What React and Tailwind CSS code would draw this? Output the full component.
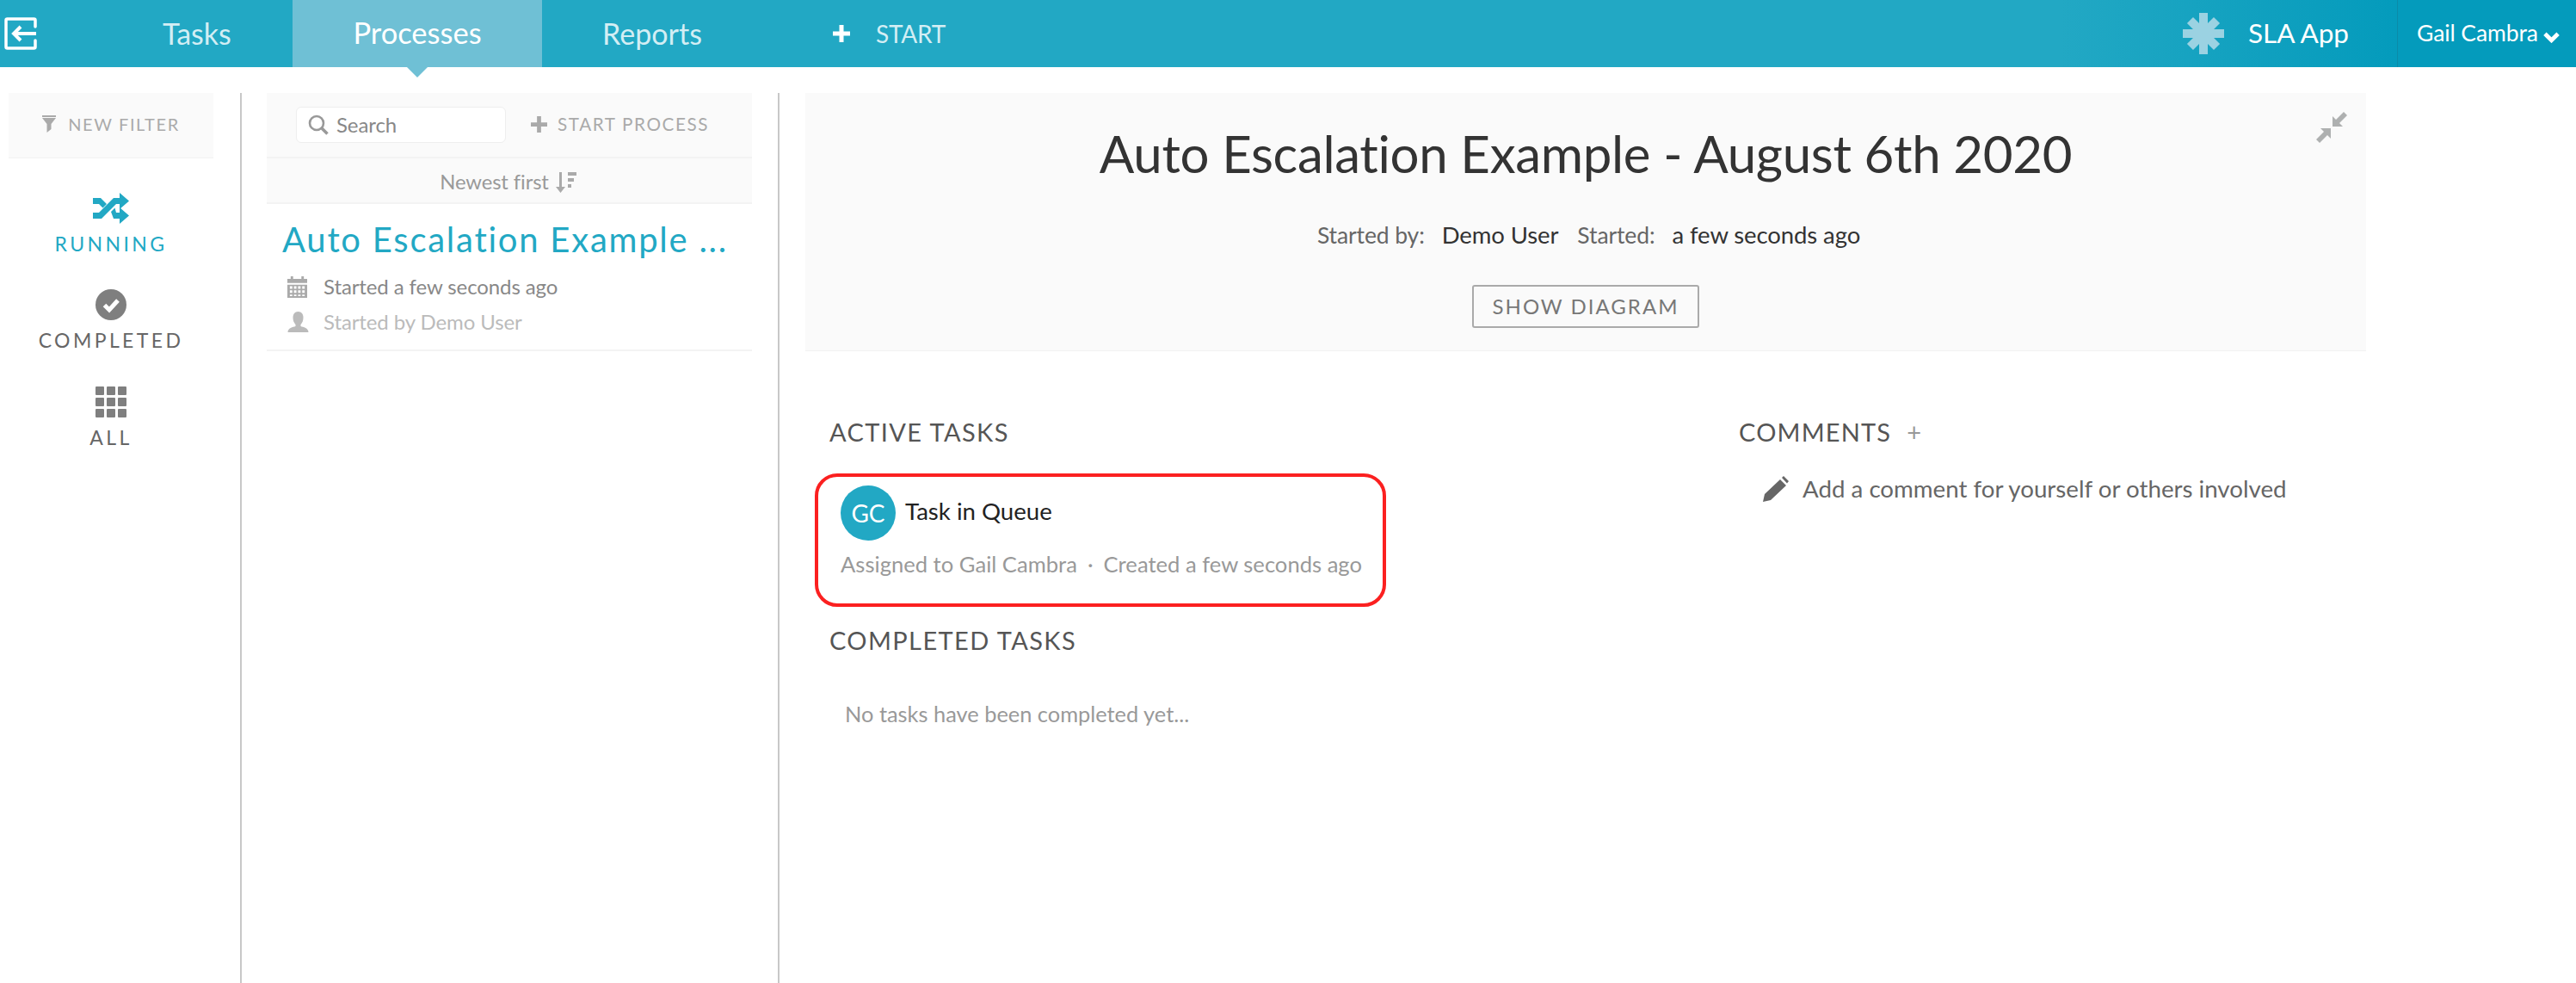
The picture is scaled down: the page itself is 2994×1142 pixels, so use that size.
import React from "react";

const Plus = ({ className }) => (
  <svg viewBox="0 0 20 20" className={className} fill="currentColor"><path d="M7.5 0h5v7.5H20v5h-7.5V20h-5v-7.5H0v-5h7.5z" /></svg>
);
const LogIn = () => (
  <svg viewBox="0 0 38 38" className="w-[38px] h-[38px] text-white" fill="none" stroke="currentColor" strokeWidth="3.5">
    <path d="M36 11V3.500a1.500 1.500 0 0 0-1.500-1.500H3.500A1.500 1.500 0 0 0 2 3.500v31A1.500 1.500 0 0 0 3.500 36h31a1.500 1.500 0 0 0 1.500-1.500V27" strokeLinecap="round" />
    <path d="M37 19H11M19 11l-8 8 8 8" strokeWidth="4" />
  </svg>
);
const Asterisk = () => (
  <svg viewBox="0 0 48 48" className="w-[48px] h-[48px] text-[#9bd2e2]" fill="currentColor">
    <rect x="19" y="0" width="10" height="48" />
    <rect x="0" y="19" width="48" height="10" />
    <rect x="19" y="2" width="10" height="44" transform="rotate(45 24 24)" />
    <rect x="19" y="2" width="10" height="44" transform="rotate(-45 24 24)" />
  </svg>
);
const Chevron = () => (
  <svg viewBox="0 0 20 14" className="w-[19px] h-[14px] text-white" fill="none" stroke="currentColor" strokeWidth="5"><path d="M2 3l8 8 8-8" /></svg>
);
const Filter = () => (
  <svg viewBox="0 0 16 20" className="w-[16px] h-[20px] text-[#aaa]" fill="currentColor">
    <path d="M0 0h16v2H0zM0 3h16l-5.500 7v6l-5 4V10z" />
  </svg>
);
const Search = () => (
  <svg viewBox="0 0 24 24" className="w-[24px] h-[24px] text-[#999]" fill="none" stroke="currentColor" strokeWidth="2.600">
    <circle cx="10" cy="10" r="8" /><path d="M16 16l6.500 6.500" strokeWidth="3.600" />
  </svg>
);
const SortIcon = () => (
  <svg viewBox="0 0 24 24" className="w-[24px] h-[24px] text-[#aaa]" fill="currentColor">
    <path d="M4 0h3v17h4l-5.500 7L0 17h4zM14 0h10v4H14zM14 7h7v4h-7zM14 14h4v4h-4z" />
  </svg>
);
const Shuffle = ({ className }) => (
  <svg viewBox="0 0 42 36" className={className} fill="currentColor">
    <path d="M0 6h9l7 7-4.500 4.500L7 13H0zM0 23h7L24 6h7V0l11 9.500L31 19v-6h-4L10 30H0z" />
    <path d="M21 22l4.500-4.500L27 23h4v-6l11 9.500L31 36v-6h-7z" />
  </svg>
);
const OkSign = () => (
  <svg viewBox="0 0 36 36" className="w-[36px] h-[36px]">
    <circle cx="18" cy="18" r="18" fill="#7f7f7f" />
    <path d="M10.500 18.500l5.500 5.500 10-11" fill="none" stroke="#fff" strokeWidth="5" />
  </svg>
);
const Grid = () => (
  <svg viewBox="0 0 36 36" className="w-[36px] h-[36px] text-[#7f7f7f]" fill="currentColor">
    {[0, 13, 26].flatMap((y) => [0, 13, 26].map((x) => <rect key={`${x}-${y}`} x={x} y={y} width="10" height="10" rx="1" />))}
  </svg>
);
const Calendar = () => (
  <svg viewBox="0 0 24 26" className="w-[23px] h-[25px] text-[#aaa]" fill="currentColor">
    <path d="M4 0h3v3h10V0h3v3h4v5H0V3h4zM0 10h24v16H0zM3 12v3h3v-3zm5 0v3h3v-3zm5 0v3h3v-3zm5 0v3h3v-3zM3 17v3h3v-3zm5 0v3h3v-3zm5 0v3h3v-3zm5 0v3h3v-3zM3 22v2h3v-2zm5 0v2h3v-2zm5 0v2h3v-2zm5 0v2h3v-2z" fillRule="evenodd" />
  </svg>
);
const User = () => (
  <svg viewBox="0 0 24 24" className="w-[25px] h-[24px] text-[#bbb]" fill="currentColor">
    <path d="M12 0c4 0 6 3 6 7 0 3-1 6-3 8v2c3 1 9 2 9 7H0c0-5 6-6 9-7v-2C7 13 6 10 6 7c0-4 2-7 6-7z" />
  </svg>
);
const Pencil = () => (
  <svg viewBox="0 0 30 30" className="w-[30px] h-[30px] text-[#666]" fill="currentColor">
    <path d="M0 30l2-9L20 4l7 7L9 28zM22 2l2-2 6 6-2 2.500z" />
  </svg>
);
const Compress = () => (
  <svg viewBox="0 0 36 36" className="w-[36px] h-[36px] text-[#aeb0b0]" fill="currentColor">
    <path d="M19 5v12h12l-4-4 9-9-4-4-9 9z" />
    <path d="M17 31V19H5l4 4-9 9 4 4 9-9z" />
  </svg>
);

function Header() {
  return (
    <header className="h-[78px] flex items-stretch text-white bg-[linear-gradient(90deg,#22a8c4_0%,#22a8c4_80%,#049bbc_93%,#049bbc_100%)]">
      <div className="w-[189px] flex items-center pl-[5px]">
        <LogIn />
      </div>
      <div className="w-[151px] flex items-center pb-[2px] text-[34px] text-[#d3eef4]">Tasks</div>
      <div className="relative w-[290px] flex items-center justify-center pb-[2px] bg-[#6fc0d5] text-[34.5px]">
        Processes
        <span className="absolute left-[133px] top-[78px] w-0 h-0 border-l-[12px] border-r-[12px] border-t-[12px] border-l-transparent border-r-transparent border-t-[#6fc0d5]" />
      </div>
      <div className="w-[256px] flex items-center justify-center pb-[2px] text-[34px] text-[#d3eef4]">Reports</div>
      <div className="flex items-center ml-[82px] gap-[30px] text-[28px] tracking-[-0.2px] text-[#d3eef4]">
        <Plus className="w-[20px] h-[20px] text-white" />
        <span>START</span>
      </div>
      <div className="ml-auto flex items-center gap-[28px] pr-[56px] text-[31.5px]">
        <Asterisk />
        <span>SLA App</span>
      </div>
      <div className="w-[208px] flex items-center border-l border-[#0b8ba8] pl-[22px] gap-[6px] text-[26.5px] tracking-[-0.1px] whitespace-nowrap">
        <span>Gail Cambra</span>
        <span className="mt-[8px]"><Chevron /></span>
      </div>
    </header>
  );
}

function Status({ icon, text, color, className }) {
  return (
    <div className={`flex flex-col items-center ${className}`}>
      {icon}
      <span className={`mt-[9px] text-[23px] tracking-[3.4px] leading-[28px] ${color}`}>{text}</span>
    </div>
  );
}

function Filters() {
  return (
    <aside className="w-[281px] pl-[10px] pr-[31px] shrink-0 border-r-2 border-[#c8c8c8]">
      <div className="h-[76px] pb-[3px] bg-[#fafafa] border-b border-[#f2f2f2] flex items-center justify-center gap-[14px] text-[20px] tracking-[1.6px] text-[#aaa]">
        <Filter />
        <span>NEW FILTER</span>
      </div>
      <div className="pt-[40px]">
        <Status icon={<Shuffle className="w-[42px] h-[36px] text-[#22a8c4]" />} text="RUNNING" color="text-[#22a8c4]" />
        <Status className="mt-[39px]" icon={<OkSign />} text="COMPLETED" color="text-[#666]" />
        <Status className="mt-[40px]" icon={<Grid />} text="ALL" color="text-[#666]" />
      </div>
    </aside>
  );
}

function ProcessList() {
  return (
    <section className="w-[564px] ml-[29px] shrink-0">
      <div className="h-[76px] bg-[#fafafa] border-b-2 border-[#f3f3f3] flex items-center pl-[34px]">
        <div className="w-[244px] h-[42px] bg-white border border-[#eee] rounded-[6px] flex items-center pl-[13px] gap-[9px] text-[24px] tracking-[-0.1px] text-[#888]">
          <Search />
          <span>Search</span>
        </div>
        <div className="flex items-center ml-[29px] gap-[12px] text-[20.7px] tracking-[1.6px] text-[#aaa]">
          <Plus className="w-[19px] h-[19px]" />
          <span>START PROCESS</span>
        </div>
      </div>
      <div className="h-[53px] pt-[5px] pr-[3px] bg-[#fafafa] border-b-2 border-[#f3f3f3] flex items-center justify-center gap-[8px] text-[23.8px] tracking-[-0.1px] text-[#999]">
        <span>Newest first</span>
        <SortIcon />
      </div>
      <div className="h-[171px] border-b-2 border-[#f3f3f3] pl-[18px] pt-[15px]">
        <div className="text-[40px] leading-[52px] tracking-[1.75px] text-[#22a8c4] whitespace-nowrap">Auto Escalation Example ...</div>
        <div className="mt-[15px] h-[28px] flex items-center gap-[19px] pl-[6px] text-[24px] tracking-[-0.1px] text-[#888]">
          <Calendar />
          <span>Started a few seconds ago</span>
        </div>
        <div className="mt-[13px] h-[28px] flex items-center gap-[17px] pl-[6px] text-[24px] tracking-[-0.1px] text-[#bbb]">
          <User />
          <span>Started by Demo User</span>
        </div>
      </div>
    </section>
  );
}

function Details() {
  return (
    <section className="flex-1 ml-[30px] border-l-2 border-[#c8c8c8] pl-[30px] pr-[244px]">
      <div className="relative h-[300px] bg-[#fafafa] border-b border-[#f2f2f2] flex flex-col items-center">
        <div className="absolute right-[22px] top-[22px]"><Compress /></div>
        <h1 className="mt-[31px] text-[60px] leading-[78px] tracking-[-0.34px] text-[#333] whitespace-nowrap">Auto Escalation Example - August 6th 2020</h1>
        <div className="mt-[38px] ml-[7px] flex items-center text-[27.5px] tracking-[-0.1px] leading-[36px] text-[#333]">
          <span className="text-[26.5px] tracking-[-0.1px] text-[#666]">Started by:</span>
          <span className="ml-[20px]">Demo User</span>
          <span className="ml-[22px] text-[26.5px] tracking-[-0.1px] text-[#666]">Started:</span>
          <span className="ml-[20px]">a few seconds ago</span>
        </div>
        <button className="mt-[40px] w-[264px] h-[50px] border-2 border-[#aaa] rounded-[3px] text-[24px] tracking-[2px] text-[#777]">SHOW DIAGRAM</button>
      </div>
      <div className="flex pt-[76px]">
        <div className="w-[1085px] shrink-0 pl-[11px]">
          <h2 className="pl-[17px] text-[29px] leading-[36px] tracking-[1.4px] text-[#555]">ACTIVE TASKS</h2>
          <div className="mt-[30px] w-[664px] h-[155px] border-[4px] border-[#fb2020] rounded-[26px] pl-[26px] pt-[10px]">
            <div className="flex items-center">
              <div className="w-[64px] h-[64px] rounded-full bg-[#22a8c4] flex items-center justify-center text-white text-[28px]">GC</div>
              <span className="ml-[11px] mb-[4px] text-[27.6px] text-[#222]">Task in Queue</span>
            </div>
            <div className="mt-[9px] text-[25.6px] leading-[36px] text-[#999] whitespace-nowrap">
              Assigned to Gail Cambra<span className="mx-[12px]">·</span>Created a few seconds ago
            </div>
          </div>
          <h2 className="mt-[21px] pl-[17px] text-[29px] leading-[36px] tracking-[1.4px] text-[#555]">COMPLETED TASKS</h2>
          <p className="mt-[49px] pl-[35px] text-[25.4px] leading-[36px] text-[#999]">No tasks have been completed yet...</p>
        </div>
        <div className="flex-1">
          <h2 className="text-[29px] leading-[36px] tracking-[1.2px] text-[#555] flex items-center gap-[18px] whitespace-nowrap">
            COMMENTS <span className="text-[#999]">+</span>
          </h2>
          <div className="mt-[30px] pl-[28px] flex items-center gap-[16px] text-[27.7px] leading-[36px] text-[#666] whitespace-nowrap">
            <Pencil />
            <span>Add a comment for yourself or others involved</span>
          </div>
        </div>
      </div>
    </section>
  );
}

export default function App() {
  return (
    <div className="font-['Lato','Open_Sans',sans-serif] h-[1142px] overflow-hidden bg-white">
      <Header />
      <main className="flex pt-[30px] h-[1064px]">
        <Filters />
        <ProcessList />
        <Details />
      </main>
    </div>
  );
}
